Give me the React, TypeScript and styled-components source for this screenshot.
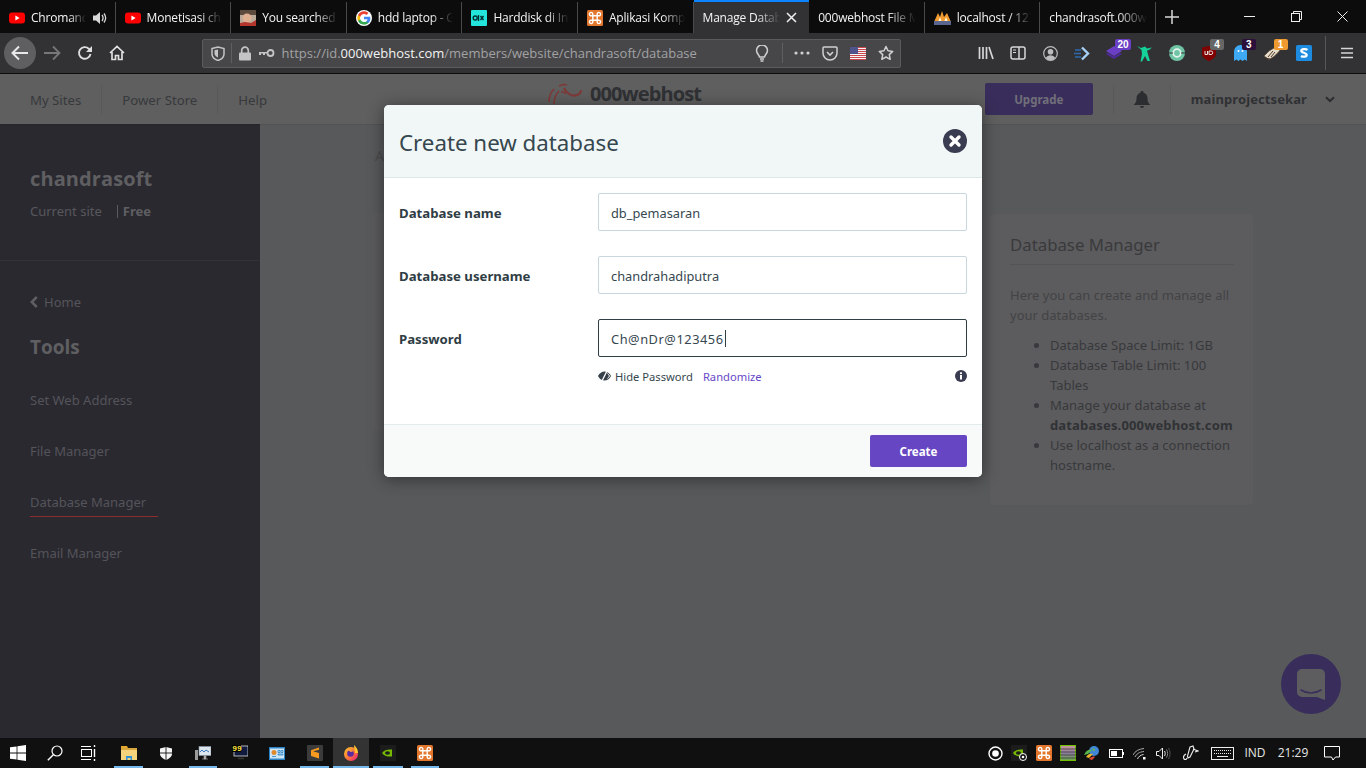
import React from "react";
import styled, { createGlobalStyle } from "styled-components";

const Global = createGlobalStyle`
  html, body { margin: 0; padding: 0; height: 100%; background: #58595b; overflow: hidden; }
  #root { height: 100%; }
  * { box-sizing: border-box; }
`;

const Screen = styled.div`
  width: 1366px; height: 768px; display: flex; flex-direction: column;
  font-family: "Noto Sans", "Open Sans", sans-serif; overflow: hidden;
`;

/* ---------- tab strip ---------- */
const TabStrip = styled.div`
  height: 33px; background: #0c0c0d; display: flex; flex: none; align-items: stretch;
`;
const TabCell = styled.div<{ $active?: boolean; $sep?: boolean }>`
  width: 115.6px; flex: none; display: flex; align-items: center; gap: 6px;
  padding: 0 ${(p) => (p.$active ? 12 : 9)}px 0 9px;
  color: #f4f4f4; font-size: 12px; position: relative;
  font-family: "Open Sans", sans-serif; letter-spacing: -0.2px;
  background: ${(p) => (p.$active ? "#323234" : "transparent")};
  border-top: 2px solid ${(p) => (p.$active ? "#0a84ff" : "transparent")};
  ${(p) => (p.$sep ? "box-shadow: inset -1px 0 0 #4a4a4c;" : "")}
`;
const TabLabel = styled.span`
  flex: 1; min-width: 0; overflow: hidden; white-space: nowrap;
  -webkit-mask-image: linear-gradient(90deg, #000 70%, transparent 100%);
  mask-image: linear-gradient(90deg, #000 70%, transparent 100%);
`;
const NewTab = styled.div`
  width: 33px; display: flex; align-items: center; justify-content: center; flex: none;
`;
const StripSpacer = styled.div`flex: 1;`;
const WinBtn = styled.div`
  width: 46.5px; display: flex; align-items: center; justify-content: center; flex: none;
  padding-bottom: 1px;
`;

/* ---------- toolbar ---------- */
const Toolbar = styled.div`
  height: 41px; flex: none; background: #323234; border-bottom: 1px solid #0c0c0d;
  display: flex; align-items: center; padding-left: 4px;
`;
const NavBtn = styled.div<{ $round?: boolean }>`
  width: 32px; height: 32px; flex: none; display: flex; align-items: center; justify-content: center;
  border-radius: 50%; margin-right: 0.4px;
  background: ${(p) => (p.$round ? "#5f5f62" : "transparent")};
`;
const UrlBar = styled.div`
  width: 699px; height: 29px; margin-left: 68px; flex: none; background: #474749; border: 1px solid #5b5b5d;
  border-radius: 2px; display: flex; align-items: center; padding-left: 8px; position: relative;
`;
const UrlIcon = styled.span<{ $w: number }>`
  width: ${(p) => p.$w}px; flex: none; display: flex; align-items: center; justify-content: center;
`;
const UrlSep = styled.span<{ $mx?: number }>`
  width: 1px; height: 20px; background: #5f5f61; flex: none; margin: 0 ${(p) => p.$mx ?? 6}px;
`;
const UrlText = styled.div`
  flex: 1; min-width: 0; font-size: 13px; color: #a2a2a4; white-space: nowrap;
  font-family: "Open Sans", sans-serif; margin-left: 1px;
  b { font-weight: 400; color: #f2f2f2; }
`;
const ExtRow = styled.div`
  margin-left: 70px; display: flex; align-items: center; height: 100%;
`;
const ExtBtn = styled.div`
  width: 31.8px; height: 32px; flex: none; display: flex; align-items: center; justify-content: center; position: relative;
`;
const Badge = styled.span<{ $bg: string; $r?: number }>`
  position: absolute; top: 2px; right: ${(p) => p.$r ?? 1}px; height: 11px; min-width: 14px; padding: 0 2px;
  font: 700 10px/11px "Liberation Sans", sans-serif; color: #fff; text-align: center;
  background: ${(p) => p.$bg}; border-radius: 2px;
`;
const ToolSep = styled.span`
  width: 1px; height: 34px; background: #58585a; flex: none; margin: 0 5px 0 5px;
`;

/* ---------- page behind the dialog ---------- */
const Page = styled.div`
  flex: 1; min-height: 0; position: relative; display: flex; flex-direction: column; background: #58595b;
`;
const SiteHeader = styled.header`
  height: 50px; flex: none; background: #5f5f5f; display: flex; align-items: center; position: relative;
  box-shadow: 0 1px 1px rgba(0,0,0,.06); z-index: 1;
`;
const HeaderLink = styled.div<{ $sep?: boolean }>`
  color: #37393c; font-size: 13.2px; padding: 1px 20px 0; height: 29px; display: flex; align-items: center;
  border-right: ${(p) => (p.$sep ? "1px solid #585858" : "0")};
  &:first-child { padding-left: 30px; }
`;
const Logo = styled.div`
  position: absolute; left: 548px; top: 9px; width: 154px; height: 41px; overflow: hidden;
  display: flex; align-items: flex-start; gap: 8px;
`;
const LogoWords = styled.div`display: flex; flex-direction: column; align-items: flex-end;`;
const LogoText = styled.div`
  font: 700 20px/22px "Open Sans", sans-serif; color: #2f3134; letter-spacing: -0.9px;
`;
const LogoSub = styled.div`
  font: 700 8px/10px "Open Sans", sans-serif; color: #2f3134; letter-spacing: .1px;
`;
const HeaderRight = styled.div`
  margin-left: auto; display: flex; align-items: center; height: 100%;
`;
const UpgradeBtn = styled.div`
  width: 108px; height: 32px; background: #392e5b; border-radius: 2px; margin-right: 20px;
  display: flex; align-items: center; justify-content: center;
  color: #716f7a; font-size: 11.5px; font-weight: 700;
`;
const BellCell = styled.div`
  width: 58px; height: 29px; display: flex; align-items: center; justify-content: center;
  border-left: 1px solid #585858; border-right: 1px solid #585858;
`;
const UserName = styled.div`
  color: #2f3134; font-weight: 700; font-size: 13px; padding-left: 20px; letter-spacing: .1px;
`;
const Chevron = styled.div`
  width: 59px; display: flex; justify-content: flex-start; padding-left: 18px;
`;

const Body = styled.div`flex: 1; min-height: 0; display: flex;`;
const Sidebar = styled.aside`
  width: 260px; flex: none; background: #2a2930; display: flex; flex-direction: column;
`;
const SideTop = styled.div`
  height: 137px; padding: 41px 30px 0; border-bottom: 1px solid #323137; flex: none;
`;
const SiteName = styled.div`
  color: #5f5f62; font: 700 20px/27px "Open Sans", sans-serif; letter-spacing: .1px;
`;
const SiteMeta = styled.div`
  color: #58585c; font-size: 13px; margin-top: 10px; display: flex; align-items: center; height: 18px;
  b { color: #5f5f62; font-weight: 700; }
`;
const Pipe = styled.span`
  width: 1px; height: 13px; background: #5a5a5e; margin: 0 5px 0 15px;
`;
const SideNav = styled.nav`
  padding: 31px 30px 0; display: flex; flex-direction: column; align-items: flex-start;
`;
const BackLink = styled.div`
  color: #55555a; font-size: 13px; display: flex; align-items: center; gap: 6px; height: 20px; margin-bottom: 21px;
`;
const ToolsTitle = styled.div`
  color: #5f5f62; font: 700 19px/28px "Open Sans", sans-serif; margin-bottom: 30px;
`;
const NavItem = styled.div<{ $current?: boolean }>`
  color: #54545a; font-size: 13px; height: 24px; line-height: 18px; margin-bottom: 27px;
  padding-bottom: 6px; width: 128px; white-space: nowrap;
  border-bottom: 1px solid ${(p) => (p.$current ? "#8a2f2c" : "transparent")};
`;
const Main = styled.main`flex: 1; min-width: 0; position: relative; padding: 90px 0 0 730px;`;
const InfoCard = styled.section`
  width: 263px; height: 291px; background: #5c5c5e; border-radius: 4px; padding: 18px 19px 0 20px;
  color: #434345; font-size: 13px; line-height: 20px; position: relative;
`;
const InfoTitle = styled.h3`
  margin: 0 0 20px; font-size: 16.8px; font-weight: 400; line-height: 26px; color: #3a3a3c;
  padding-bottom: 6px; border-bottom: 1px solid #545456;
`;
const InfoText = styled.p`margin: 0 0 10px;`;
const InfoList = styled.ul`
  margin: 0; padding: 0 0 0 40px; color: #38393c; margin-right: -6px;
  b { font-weight: 700; color: #303235; letter-spacing: .15px; }
`;
const HiddenCard = styled.section`
  position: absolute; left: 112px; top: 89px; width: 310px; height: 217px;
  background: #5b5b5d; border-radius: 4px;
`;
const Crumb = styled.div`
  position: absolute; left: 115px; top: 22px; color: #48494b; font-size: 14px;
`;
const ChatBubble = styled.div`
  position: absolute; right: 25px; bottom: 24px; width: 60px; height: 60px; border-radius: 50%;
  background: #392e5b; display: flex; align-items: center; justify-content: center; z-index: 1;
`;

/* ---------- dialog ---------- */
const Modal = styled.div`
  position: absolute; left: 384px; top: 31px; width: 598px; height: 372px; z-index: 2;
  background: #fff; border-radius: 5px; overflow: hidden;
  box-shadow: 0 2px 16px rgba(0,0,0,.45); display: flex; flex-direction: column;
`;
const ModalHead = styled.div`
  height: 73px; flex: none; background: #f1f7f7; border-bottom: 1px solid #dfe8e8;
  display: flex; align-items: center; justify-content: space-between; padding: 0 15px;
`;
const ModalTitle = styled.h2`
  margin: 3px 0 0; font-size: 22.3px; font-weight: 400; color: #36474f; line-height: 30px;
`;
const CloseBtn = styled.div`
  width: 24px; height: 24px; margin-bottom: 1px; display: flex;
`;
const ModalBody = styled.div`
  flex: 1; padding: 15px 15px 0; display: flex; flex-direction: column; gap: 25px;
`;
const Field = styled.div`
  display: grid; grid-template-columns: 199px 369px; align-items: center;
`;
const FieldLabel = styled.label`
  color: #2f3d45; font-size: 13.2px; font-weight: 700; padding-top: 2px;
`;
const TextBox = styled.div<{ $focus?: boolean; $track?: number }>`
  height: 38px; border: 1px solid ${(p) => (p.$focus ? "#2f3d45" : "#c8d6dd")}; border-radius: 2px;
  padding: 1px 12px 0; display: flex; align-items: center; font-size: 12.8px; color: #36474f;
  letter-spacing: ${(p) => p.$track ?? 0}px;
`;
const Caret = styled.span`
  display: inline-block; width: 1px; height: 17px; background: #2f3d45; margin-left: 1px;
`;
const PwdTools = styled.div`
  margin: -14px 0 0 199px; width: 369px; height: 16px; display: flex; align-items: center;
  font-size: 11.2px; color: #36474f; position: relative;
`;
const HideLink = styled.span`display: flex; align-items: center; gap: 4px; margin-right: 10px;`;
const RandomLink = styled.span`color: #6747c7;`;
const InfoIcon = styled.span`margin-left: auto; display: flex;`;
const ModalFoot = styled.div`
  height: 53px; flex: none; background: #f8f9f9; border-top: 1px solid #e3ecec;
  display: flex; align-items: center; justify-content: flex-end; padding: 0 15px;
`;
const CreateBtn = styled.div`
  width: 97px; height: 32px; background: #6746c3; border-radius: 2px; color: #fff; font-size: 11.5px; font-weight: 700;
  display: flex; align-items: center; justify-content: center;
`;

/* ---------- taskbar ---------- */
const Taskbar = styled.div`
  height: 30px; flex: none; background: #101010; display: flex; align-items: stretch;
`;
const TaskBtn = styled.div<{ $w?: number; $on?: boolean; $active?: boolean; $nudge?: number }>`
  width: ${(p) => p.$w ?? 37}px; flex: none; display: flex; align-items: center; justify-content: center; position: relative;
  padding-right: ${(p) => p.$nudge ?? 0}px;
  background: ${(p) => (p.$active ? "#333" : "transparent")};
  ${(p) =>
    p.$on
      ? `&::after { content: ""; position: absolute; left: ${p.$active ? 0 : 4}px; right: ${p.$active ? 0 : 4}px; bottom: 0; height: 2px; background: #76b9ed; }`
      : ""}
`;
const Tray = styled.div`margin-left: auto; display: flex; align-items: center; height: 100%;`;
const TrayIcon = styled.div<{ $w?: number }>`
  width: ${(p) => p.$w ?? 24}px; flex: none; display: flex; align-items: center; justify-content: center; height: 100%;
`;
const TrayText = styled.div<{ $w: number }>`
  width: ${(p) => p.$w}px; flex: none; text-align: center; color: #e6e6e6; font: 12px/30px "Open Sans", sans-serif;
`;

/* ---------- icons ---------- */
const YouTube = () => (
  <svg width="16" height="16" viewBox="0 0 16 16"><rect y="2.5" width="16" height="11" rx="3" fill="#f00" /><path d="M6.4 5.5v5L10.6 8z" fill="#fff" /></svg>
);
const Speaker = () => (
  <svg width="15" height="14" viewBox="0 0 15 14"><path d="M1 4.5h3L8 1v12L4 9.500H1z" fill="#d8d8d8" /><path d="M10 4c1.300 1.800 1.300 4.200 0 6M12 2.500c2 2.700 2 6.300 0 9" stroke="#d8d8d8" strokeWidth="1.300" fill="none" /></svg>
);
const Portrait = () => (
  <svg width="16" height="16" viewBox="0 0 16 16"><rect width="16" height="16" fill="#b9aa9a" /><rect width="16" height="5" fill="#5c4a3c" /><circle cx="7" cy="8" r="4.500" fill="#e0b090" /><path d="M0 16v-3l5-1 6 1 5-3v6z" fill="#b5342c" /></svg>
);
const Google = () => (
  <svg width="16" height="16" viewBox="0 0 48 48"><circle cx="24" cy="24" r="24" fill="#fff" /><path fill="#4285F4" d="M43 24.500c0-1.400-.1-2.700-.4-4H24v7.600h10.700c-.5 2.500-1.900 4.600-4 6v5h6.500C41 35.600 43 30.500 43 24.500z" /><path fill="#34A853" d="M24 44c5.400 0 9.900-1.800 13.200-4.800l-6.500-5c-1.800 1.200-4 1.900-6.700 1.900-5.200 0-9.600-3.500-11.200-8.200H6.100v5.200C9.400 39.600 16.200 44 24 44z" /><path fill="#FBBC05" d="M12.800 27.900c-.4-1.200-.6-2.500-.6-3.900s.2-2.700.6-3.900v-5.200H6.100C4.800 17.600 4 20.700 4 24s.8 6.400 2.100 9.100z" /><path fill="#EA4335" d="M24 11.900c2.900 0 5.600 1 7.700 3l5.800-5.800C34 5.800 29.400 4 24 4 16.200 4 9.400 8.400 6.100 14.900l6.700 5.200c1.600-4.700 6-8.200 11.200-8.200z" /></svg>
);
const Olx = () => (
  <svg width="16" height="16" viewBox="0 0 16 16"><rect width="16" height="16" rx="1" fill="#23e5db" /><circle cx="4.200" cy="8" r="2" fill="none" stroke="#002f34" strokeWidth="1.400" /><path d="M7.500 5v6" stroke="#002f34" strokeWidth="1.400" /><path d="M9.500 6l3 4M12.500 6l-3 4" stroke="#002f34" strokeWidth="1.400" /></svg>
);
const Xampp = ({ size = 16 }: { size?: number }) => (
  <svg width={size} height={size} viewBox="0 0 16 16"><rect width="16" height="16" rx="1.500" fill="#e2762c" /><path d="M5.800 5.800H4.300a1.700 1.700 0 1 1 1.500-1.500v7.400a1.700 1.700 0 1 1-1.500-1.500h7.400a1.700 1.700 0 1 1-1.500 1.500V4.300a1.700 1.700 0 1 1 1.500 1.500z" fill="none" stroke="#fff" strokeWidth="1.400" /></svg>
);
const Pma = () => (
  <svg width="17" height="16" viewBox="0 0 17 16"><path d="M0 12 4 3l2 4 2-6 2 6 3-4 4 9z" fill="#f29b2f" /><path d="M4 12l2-5 2 5zM10 12l2-5 2 5z" fill="#fff2d0" /><rect x="0" y="11" width="17" height="4" fill="#5a6590" /></svg>
);
const BackArrow = () => (
  <svg width="18" height="16" viewBox="0 0 18 16"><path d="M8 1.500 1.500 8 8 14.500M2 8h15" stroke="#e8e8e8" strokeWidth="2" fill="none" /></svg>
);
const FwdArrow = () => (
  <svg width="18" height="16" viewBox="0 0 18 16"><path d="M10 1.500 16.500 8 10 14.500M16 8H1" stroke="#77777a" strokeWidth="1.800" fill="none" /></svg>
);
const Reload = () => (
  <svg width="16" height="16" viewBox="0 0 16 16"><path d="M13.500 9A5.800 5.800 0 1 1 11.800 3.700L14 6" stroke="#dedede" strokeWidth="1.900" fill="none" /><path d="M15 1v6H9z" fill="#dedede" /></svg>
);
const Home = () => (
  <svg width="16" height="16" viewBox="0 0 16 16"><path d="M1 8 8 1.500 15 8M3 7v7.500h3.500v-4h3v4H13V7" stroke="#e0e0e0" strokeWidth="1.700" fill="none" /></svg>
);
const Shield = () => (
  <svg width="14" height="15" viewBox="0 0 14 15"><path d="M1 2.500 7 1l6 1.500V8c0 3-3 5.500-6 6.500C4 13.500 1 11 1 8z" fill="none" stroke="#c4c4c6" strokeWidth="1.500" /><path d="M7 3.500v8c-2-1-3.500-2.300-3.500-4V4.300z" fill="#c4c4c6" /></svg>
);
const Lock = () => (
  <svg width="14" height="15" viewBox="0 0 14 15"><rect x="1" y="6.500" width="12" height="8" rx="1" fill="#c4c4c6" /><path d="M3.700 7V4.500a3.300 3.300 0 0 1 6.600 0V7" stroke="#c4c4c6" strokeWidth="1.700" fill="none" /></svg>
);
const KeyIcon = () => (
  <svg width="17" height="10" viewBox="0 0 17 10"><circle cx="12.500" cy="5" r="3" fill="none" stroke="#c4c4c6" strokeWidth="1.800" /><path d="M10 4H1v3h2V5.500h2V7h2V5.500h3z" fill="#c4c4c6" /></svg>
);
const Bulb = () => (
  <svg width="14" height="17" viewBox="0 0 14 17"><path d="M4.500 12c0-2-3-3.500-3-6.500a5.500 5.500 0 0 1 11 0c0 3-3 4.500-3 6.500z" fill="none" stroke="#d0d0d2" strokeWidth="1.500" /><path d="M5 14h4M5.500 16h3" stroke="#d0d0d2" strokeWidth="1.500" /></svg>
);
const Dots = () => (
  <svg width="16" height="4" viewBox="0 0 16 4"><circle cx="2" cy="2" r="1.600" fill="#d0d0d2" /><circle cx="8" cy="2" r="1.600" fill="#d0d0d2" /><circle cx="14" cy="2" r="1.600" fill="#d0d0d2" /></svg>
);
const Pocket = () => (
  <svg width="16" height="15" viewBox="0 0 16 15"><path d="M2 1h12a1 1 0 0 1 1 1v5a7 7 0 0 1-14 0V2a1 1 0 0 1 1-1z" fill="none" stroke="#d0d0d2" strokeWidth="1.500" /><path d="M5 6l3 3 3-3" stroke="#d0d0d2" strokeWidth="1.600" fill="none" /></svg>
);
const Flag = () => (
  <svg width="16" height="13" viewBox="0 0 16 13">
    <rect width="16" height="13" fill="#f5f5f5" />
    {[0, 2, 4, 6, 8, 10, 12].map((y) => (<rect key={y} y={y} width="16" height="1" fill="#c8484f" />))}
    <rect width="8" height="7" fill="#4f558c" />
  </svg>
);
const Star = () => (
  <svg width="16" height="16" viewBox="0 0 16 16"><path d="M8 1.500l2 4.300 4.700.6-3.400 3.200.9 4.700L8 12l-4.200 2.300.9-4.700L1.300 6.400 6 5.800z" fill="none" stroke="#d0d0d2" strokeWidth="1.500" strokeLinejoin="round" /></svg>
);
const Library = () => (
  <svg width="16" height="14" viewBox="0 0 16 14"><path d="M1.500 1v12M5 1v12M8.500 1v12M11 1l4 12" stroke="#d6d6d8" strokeWidth="1.700" fill="none" /></svg>
);
const SidebarIc = () => (
  <svg width="16" height="14" viewBox="0 0 16 14"><rect x="1" y="1" width="14" height="12" rx="2" fill="none" stroke="#d6d6d8" strokeWidth="1.500" /><path d="M9 1v12" stroke="#d6d6d8" strokeWidth="1.500" /><path d="M3 4h3M3 6.500h3" stroke="#d6d6d8" /></svg>
);
const Account = () => (
  <svg width="15" height="15" viewBox="0 0 15 15"><circle cx="7.500" cy="7.500" r="6.800" fill="none" stroke="#bdbdbf" strokeWidth="1.200" /><circle cx="7.500" cy="5.800" r="2.800" fill="#bdbdbf" /><path d="M2.800 12c1-2 2.800-2.800 4.700-2.800s3.700.8 4.700 2.800a6 6 0 0 1-9.400 0z" fill="#bdbdbf" /></svg>
);
const DashArrow = () => (
  <svg width="16" height="15" viewBox="0 0 16 15"><path d="M8 1.500l6 6-6 6" fill="none" stroke="#a6d0f5" strokeWidth="2.400" /><path d="M1 4h6M0 7.500h7M1 11h6" stroke="#2d6bb0" strokeWidth="1.600" /></svg>
);
const Layers = () => (
  <svg width="16" height="14" viewBox="0 0 16 14"><path d="M8 0l8 5-8 5-8-5z" fill="#6a3fc4" /><path d="M0 8l8 5 8-5-2-1-6 3.500L2 7z" fill="#4f2a9e" /></svg>
);
const Runner = () => (
  <svg width="16" height="17" viewBox="0 0 16 17"><path d="M0 1l4 2 4-1.500 2 2 5-1-3 2.500-2 .5 1 4 2 6.500h-2.500L8 11l-3 5.500H3.500L5 9 4.500 5z" fill="#14d29a" /></svg>
);
const Ring = () => (
  <svg width="16" height="16" viewBox="0 0 16 16"><circle cx="8" cy="8" r="8" fill="#6fc4a4" /><circle cx="8" cy="8" r="3.800" fill="none" stroke="#e6f3ee" strokeWidth="1.800" /><path d="M0 8h4M12 8h4" stroke="#323234" strokeWidth="1" /></svg>
);
const UBlock = () => (
  <svg width="14" height="15" viewBox="0 0 14 15"><path d="M0 1.500 7 0l7 1.500V8c0 3-3.500 5.500-7 7-3.500-1.500-7-4-7-7z" fill="#800000" /><path d="M3 5v3.500h2.500V5M7 5v3.500h2a1.700 1.700 0 0 0 0-3.500z" fill="none" stroke="#e8dcdc" strokeWidth="1" /></svg>
);
const Ghost = () => (
  <svg width="13" height="16" viewBox="0 0 13 16"><path d="M0 16V6.500a6.500 6.500 0 0 1 13 0V16l-2.200-1.500L8.500 16l-2-1.500L4.500 16l-2.200-1.500z" fill="#3ea9f5" /><circle cx="4.500" cy="6" r="1" fill="#fff" /><circle cx="8.500" cy="6" r="1" fill="#fff" /></svg>
);
const Shoe = () => (
  <svg width="17" height="14" viewBox="0 0 17 14"><path d="M0 10l5-5 5-3 3 1.500 4-.5-3 3.500-4 4-5 3z" fill="#e7dcc9" stroke="#5a4a3a" strokeWidth=".8" /><path d="M4 11l5-6M7 11l4-5M1 12l5 1" stroke="#4a3a2a" strokeWidth="1" /></svg>
);
const SBox = () => (
  <svg width="16" height="16" viewBox="0 0 16 16"><rect width="16" height="16" rx="1.500" fill="#1c8be0" /><path d="M11.500 4.800C10 3.800 5.500 3.700 5.300 5.800c-.2 2.200 5.400 1.800 5.400 4.200 0 2-4 2.100-5.700 1" fill="none" stroke="#fff" strokeWidth="2.200" /></svg>
);
const Burger = () => (
  <svg width="14" height="12" viewBox="0 0 14 12"><path d="M1 1.500h12M1 6h12M1 10.500h12" stroke="#d6d6d8" strokeWidth="1.700" /></svg>
);
const LogoMark = () => (
  <svg width="34" height="24" viewBox="0 0 34 24" fill="none" stroke="#7f3a38" strokeWidth="1.600"><path d="M1 19C1 14 3 9 6 6" /><path d="M6 21C6 16 8 11 11 8" /><path d="M11 3c2-1 5-2 8-1" /><path d="M13 9c3 0 3 0 5 2" /><path d="M16 5c2 5 8 9 13 7 3-1 4-3 4-5" strokeWidth="2.200" /></svg>
);
const Bell = () => (
  <svg width="16" height="17" viewBox="0 0 16 17"><path d="M8 0a1.500 1.500 0 0 1 1.500 1.800C12 2.500 13.500 4.500 13.500 7c0 4 1 5 2.500 6.500V14H0v-.5C1.500 12 2.500 11 2.500 7c0-2.500 1.500-4.500 4-5.200A1.500 1.500 0 0 1 8 0zM6 15h4a2 2 0 0 1-4 0z" fill="#2b2d30" /></svg>
);
const ChevDown = () => (
  <svg width="10" height="7" viewBox="0 0 10 7"><path d="M1 1.200 5 5l4-3.800" stroke="#2b2d30" strokeWidth="2" fill="none" /></svg>
);
const ChevLeft = () => (
  <svg width="8" height="12" viewBox="0 0 8 12"><path d="M6.800 1 1.800 6l5 5" stroke="#5f5f62" strokeWidth="2.500" fill="none" /></svg>
);
const CloseCircle = () => (
  <svg width="24" height="24" viewBox="0 0 24 24"><circle cx="12" cy="12" r="12" fill="#3a3c52" /><path d="M8 8l8 8M16 8l-8 8" stroke="#fff" strokeWidth="3.400" strokeLinecap="round" /></svg>
);
const EyeSlash = () => (
  <svg width="13" height="12" viewBox="0 0 13 12"><path d="M0 6C1.500 3 4 1.500 6.500 1.500S11.500 3 13 6C11.500 9 9 10.500 6.500 10.500S1.500 9 0 6z" fill="#36404a" /><path d="M9.500 0 3.500 12" stroke="#fff" strokeWidth="1.300" /><path d="M9.500 3.500c.9.700 1.500 1.500 2 2.500-.5 1-1.100 1.800-2 2.500" stroke="#fff" fill="none" /></svg>
);
const InfoDot = () => (
  <svg width="12" height="12" viewBox="0 0 12 12"><circle cx="6" cy="6" r="6" fill="#3a3c52" /><rect x="5" y="5" width="2" height="4.500" fill="#fff" /><rect x="5" y="2.300" width="2" height="1.800" fill="#fff" /></svg>
);
const Chat = () => (
  <svg width="28" height="31" viewBox="0 0 28 31"><path d="M5 0h18a5 5 0 0 1 5 5v26l-8-3H5a5 5 0 0 1-5-5V5a5 5 0 0 1 5-5z" fill="#5d5d5f" /><path d="M4 21c6 4 14 4 20 0" stroke="#392e5b" strokeWidth="1.600" fill="none" strokeLinecap="round" /></svg>
);
const Win = () => (
  <svg width="16" height="16" viewBox="0 0 16 16"><path d="M0 2.300 6.600 1.400V7.600H0zM7.400 1.300 16 0v7.600H7.400zM0 8.400h6.600v6.200L0 13.700zM7.400 8.400H16V16l-8.600-1.300z" fill="#fff" /></svg>
);
const Search = () => (
  <svg width="16" height="16" viewBox="0 0 16 16"><circle cx="10" cy="6" r="5" fill="none" stroke="#fff" strokeWidth="1.200" /><path d="M6.300 9.700 .8 15.300" stroke="#fff" strokeWidth="1.400" /></svg>
);
const TaskView = () => (
  <svg width="16" height="16" viewBox="0 0 16 16" fill="none" stroke="#fff"><path d="M0 1.500h10M0 14.500h10" /><rect x=".5" y="4.500" width="10" height="7" /><path d="M13.500 0v2M13.500 14v2M13.500 4v8" strokeWidth="1.400" /></svg>
);
const Explorer = () => (
  <svg width="16" height="16" viewBox="0 0 16 16"><path d="M0 1h6l1 2H0z" fill="#e5a82e" /><rect y="3" width="16" height="12" fill="#f4d37c" /><rect y="3" width="16" height="2" fill="#d9a63d" /><path d="M5 15v-4h6v4H9.500v-2h-3v2z" fill="#2e8fd6" /></svg>
);
const DefShield = () => (
  <svg width="12" height="13" viewBox="0 0 12 13"><path d="M0 1.500 6 0l6 1.500V7c0 2.500-3 5-6 6-3-1-6-3.500-6-6z" fill="#f4f4f4" /><path d="M6 0v13M0 6h12" stroke="#101010" strokeWidth=".9" /></svg>
);
const MonitorPulse = () => (
  <svg width="16" height="16" viewBox="0 0 16 16"><rect x="0" y="5" width="3" height="10" fill="#9a9a9a" /><rect x="4" y="1.500" width="12" height="9" fill="#dde6ee" stroke="#8a98a8" strokeWidth=".6" /><path d="M5 7l2-2 2 2 2-2 3 2" stroke="#3b7bc0" fill="none" /><path d="M7 14h6M9 11h2v3H9z" fill="#aaa" stroke="#aaa" strokeWidth=".6" /></svg>
);
const Fps = () => (
  <svg width="16" height="16" viewBox="0 0 16 16"><rect x="2" y="1" width="14" height="10" fill="#0f1a3c" stroke="#ddd" strokeWidth=".8" /><rect x="0" y="0" width="9" height="7" fill="#000" /><text x="0.300" y="6.300" fontFamily="Liberation Mono, monospace" fontWeight="700" fontSize="8" fill="#ffe23c">99</text><path d="M6 13.500h6" stroke="#333" strokeWidth="1.500" /></svg>
);
const ControlPanel = () => (
  <svg width="16" height="13" viewBox="0 0 16 13"><rect width="16" height="13" fill="#2a82c4" /><rect x="1" y="1.500" width="14" height="10" fill="#cfe6f6" /><circle cx="5" cy="5.500" r="2.500" fill="#e08a2e" /><path d="M9 3.500h2v2H9zM12 3.500h2v2h-2zM9 7h5v1H9zM3 9.500h4" stroke="#2a82c4" strokeWidth=".8" fill="none" /></svg>
);
const Sublime = () => (
  <svg width="16" height="16" viewBox="0 0 16 16"><rect width="16" height="16" rx="1" fill="#3b3b3b" /><path d="M12 2.500 4 5.300v3l8 2.500V8L6 6.200l6-1.500zM4 8.300v2.800L12 13.500v-3z" fill="#f79a1f" /></svg>
);
const Firefox = () => (
  <svg width="16" height="16" viewBox="0 0 16 16"><defs><linearGradient id="ffg" x1="0" y1="0" x2="1" y2="1"><stop offset="0" stopColor="#ffcb2e" /><stop offset=".55" stopColor="#ff7139" /><stop offset="1" stopColor="#e31587" /></linearGradient></defs><circle cx="8" cy="9" r="7" fill="url(#ffg)" /><path d="M11 0c2 2 4 4 4 8h-3c0-3-1-5-1-8z" fill="#ffc42e" /><circle cx="7.500" cy="8.500" r="3.300" fill="#5b2a9e" /><path d="M5 5.500c1.500-1 4-1 5 1l-2 .5z" fill="#ff9640" /></svg>
);
const Nvidia = ({ badge }: { badge?: boolean }) => (
  <svg width="16" height="16" viewBox="0 0 16 16"><rect width="16" height="16" fill="#1c1c1c" /><path d="M2 8c2-3 6-4 10-3.500v7C8 12 4 11 2 8z" fill="#76b900" /><ellipse cx="7.500" cy="8" rx="2.500" ry="1.700" fill="#1c1c1c" />{badge && (<><circle cx="12" cy="12" r="3.500" fill="#101010" stroke="#fff" /><circle cx="12" cy="12" r="1.300" fill="#fff" /></>)}</svg>
);
const RecordDot = () => (
  <svg width="15" height="15" viewBox="0 0 15 15"><circle cx="7.500" cy="7.500" r="6.500" fill="none" stroke="#fff" strokeWidth="1.400" /><circle cx="7.500" cy="7.500" r="3.300" fill="#fff" /></svg>
);
const GridIcon = () => (
  <svg width="16" height="16" viewBox="0 0 16 16"><defs><linearGradient id="gg" x1="0" y1="0" x2="0" y2="1"><stop offset="0" stopColor="#c99" /><stop offset=".5" stopColor="#8c7ca0" /><stop offset="1" stopColor="#6da84a" /></linearGradient></defs><rect x=".5" y=".5" width="15" height="15" fill="url(#gg)" stroke="#6ec000" /><path d="M0 4h16M0 7h16M0 10h16M0 13h16" stroke="#222" strokeWidth=".6" /></svg>
);
const Idm = () => (
  <svg width="16" height="16" viewBox="0 0 16 16"><circle cx="10" cy="6" r="5" fill="#3f86d8" /><path d="M8 3l3 1-1 3z" fill="#6cb84c" /><path d="M0 10c2-5 5-6 8-5L4 9z" fill="#5ab84a" /><path d="M2 12c2-3 4-4 7-3l-4 4z" fill="#e8b82e" /><path d="M5 14c2-2 4-3 6-2l-3 3z" fill="#e24a3a" /></svg>
);
const Battery = () => (
  <svg width="15" height="9" viewBox="0 0 15 9"><rect x=".5" y=".5" width="13" height="8" fill="none" stroke="#fff" /><rect x="2" y="2" width="6" height="5" fill="#fff" /><rect x="14" y="3" width="1" height="3" fill="#fff" /></svg>
);
const Wifi = () => (
  <svg width="14" height="13" viewBox="0 0 14 13" fill="none" stroke="#aaa"><path d="M0 8C2 4 6 2 11 1.500" /><path d="M2 10c1.500-3 4-5 9-5.500" /><path d="M4.500 12c1-2.500 3-4 6-4.500" stroke="#ddd" /><rect x="10" y="10" width="2.500" height="2.500" fill="#fff" stroke="none" /></svg>
);
const Volume = () => (
  <svg width="16" height="13" viewBox="0 0 16 13" fill="none" stroke="#eee"><path d="M.5 4.500h2.500L6.500 1v11L3 8.500H.5z" /><path d="M8.500 4c.9 1.500.9 3.500 0 5" /><path d="M10.500 2.500c1.500 2.500 1.500 5.500 0 8" stroke="#888" /><path d="M12.500 1c2 3.500 2 7.500 0 11" stroke="#555" /></svg>
);
const Pen = () => (
  <svg width="16" height="16" viewBox="0 0 16 16" fill="none" stroke="#eee" strokeWidth="1.100"><path d="M7 2l3-1 1 3-4 8-2 1-.5-2z" /><path d="M10 4l5 2-3 1" /><path d="M3 9c-2 1-3 3-2 5 1 1 2.500.5 3-1" /></svg>
);
const Keyboard = () => (
  <svg width="23" height="13" viewBox="0 0 23 13" fill="none" stroke="#eee"><rect x=".5" y=".5" width="22" height="12" /><path d="M3 3.500h17M3 6.500h17" strokeDasharray="1 1" /><path d="M6 9.500h11" /></svg>
);
const Notify = () => (
  <svg width="16" height="15" viewBox="0 0 16 15"><path d="M.5.500h15v10.500h-4l-2.500 3-1.500-3H.5z" fill="none" stroke="#fff" /></svg>
);

const tabs: { icon?: React.ReactNode; label: string; extra?: React.ReactNode }[] = [
  { icon: <YouTube />, label: "Chromance", extra: <Speaker /> },
  { icon: <YouTube />, label: "Monetisasi chan" },
  { icon: <Portrait />, label: "You searched for" },
  { icon: <Google />, label: "hdd laptop - Google" },
  { icon: <Olx />, label: "Harddisk di Indonesia" },
  { icon: <Xampp />, label: "Aplikasi Kompute" },
];

export default function App() {
  return (
    <Screen>
      <Global />
      <TabStrip>
        {tabs.map((t) => (
          <TabCell key={t.label} $sep>
            {t.icon}
            <TabLabel>{t.label}</TabLabel>
            {t.extra}
          </TabCell>
        ))}
        <TabCell $active>
          <TabLabel>Manage Database</TabLabel>
          <svg width="11" height="11" viewBox="0 0 11 11"><path d="M1 1l9 9M10 1l-9 9" stroke="#f0f0f0" strokeWidth="1.500" /></svg>
        </TabCell>
        <TabCell $sep><TabLabel>000webhost File Manager</TabLabel></TabCell>
        <TabCell $sep><Pma /><TabLabel>localhost / 127.0.0.1</TabLabel></TabCell>
        <TabCell $sep><TabLabel>chandrasoft.000webhost</TabLabel></TabCell>
        <NewTab>
          <svg width="14" height="14" viewBox="0 0 14 14"><path d="M7 0v14M0 7h14" stroke="#d8d8d8" strokeWidth="1.500" /></svg>
        </NewTab>
        <StripSpacer />
        <WinBtn><svg width="11" height="11" viewBox="0 0 11 11"><path d="M0 5.500h11" stroke="#eee" /></svg></WinBtn>
        <WinBtn><svg width="11" height="11" viewBox="0 0 11 11" fill="none" stroke="#eee"><rect x=".5" y="2.500" width="8" height="8" /><path d="M2.500 2.500v-2h8v8h-2" /></svg></WinBtn>
        <WinBtn><svg width="11" height="11" viewBox="0 0 11 11"><path d="M.5.500l10 10M10.500.500l-10 10" stroke="#eee" /></svg></WinBtn>
      </TabStrip>

      <Toolbar>
        <NavBtn $round><BackArrow /></NavBtn>
        <NavBtn><FwdArrow /></NavBtn>
        <NavBtn><Reload /></NavBtn>
        <NavBtn><Home /></NavBtn>
        <UrlBar>
          <UrlIcon $w={14}><Shield /></UrlIcon>
          <UrlSep />
          <UrlIcon $w={14}><Lock /></UrlIcon>
          <UrlIcon $w={29}><KeyIcon /></UrlIcon>
          <UrlText>https://id.<b>000webhost.com</b>/members/website/chandrasoft/database</UrlText>
          <UrlIcon $w={32}><Bulb /></UrlIcon>
          <UrlSep $mx={4} />
          <UrlIcon $w={30}><Dots /></UrlIcon>
          <UrlIcon $w={27}><Pocket /></UrlIcon>
          <UrlIcon $w={28}><Flag /></UrlIcon>
          <UrlIcon $w={28}><Star /></UrlIcon>
        </UrlBar>
        <ExtRow>
          <ExtBtn><Library /></ExtBtn>
          <ExtBtn><SidebarIc /></ExtBtn>
          <ExtBtn><Account /></ExtBtn>
          <ExtBtn><DashArrow /></ExtBtn>
          <ExtBtn><Layers /><Badge $bg="#6a3fc4" $r={-1}>20</Badge></ExtBtn>
          <ExtBtn><Runner /></ExtBtn>
          <ExtBtn><Ring /></ExtBtn>
          <ExtBtn><UBlock /><Badge $bg="#666">4</Badge></ExtBtn>
          <ExtBtn><Ghost /><Badge $bg="#2c0f3a">3</Badge></ExtBtn>
          <ExtBtn><Shoe /><Badge $bg="#ef9a2e">1</Badge></ExtBtn>
          <ExtBtn><SBox /></ExtBtn>
          <ToolSep />
          <ExtBtn><Burger /></ExtBtn>
        </ExtRow>
      </Toolbar>

      <Page>
        <SiteHeader>
          <HeaderLink $sep>My Sites</HeaderLink>
          <HeaderLink $sep>Power Store</HeaderLink>
          <HeaderLink>Help</HeaderLink>
          <Logo>
            <LogoMark />
            <LogoWords>
              <LogoText>000webhost</LogoText>
              <LogoSub>powered by HOSTINGER</LogoSub>
            </LogoWords>
          </Logo>
          <HeaderRight>
            <UpgradeBtn>Upgrade</UpgradeBtn>
            <BellCell><Bell /></BellCell>
            <UserName>mainprojectsekar</UserName>
            <Chevron><ChevDown /></Chevron>
          </HeaderRight>
        </SiteHeader>
        <Body>
          <Sidebar>
            <SideTop>
              <SiteName>chandrasoft</SiteName>
              <SiteMeta>Current site<Pipe /><b>Free</b></SiteMeta>
            </SideTop>
            <SideNav>
              <BackLink><ChevLeft />Home</BackLink>
              <ToolsTitle>Tools</ToolsTitle>
              <NavItem>Set Web Address</NavItem>
              <NavItem>File Manager</NavItem>
              <NavItem $current>Database Manager</NavItem>
              <NavItem>Email Manager</NavItem>
            </SideNav>
          </Sidebar>
          <Main>
            <Crumb>A</Crumb>
            <HiddenCard />
            <InfoCard>
              <InfoTitle>Database Manager</InfoTitle>
              <InfoText>Here you can create and manage all your databases.</InfoText>
              <InfoList>
                <li>Database Space Limit: 1GB</li>
                <li>Database Table Limit: 100 Tables</li>
                <li>Manage your database at <b>databases.000webhost.com</b></li>
                <li>Use localhost as a connection hostname.</li>
              </InfoList>
            </InfoCard>
          </Main>
        </Body>
        <ChatBubble><Chat /></ChatBubble>

        <Modal>
          <ModalHead>
            <ModalTitle>Create new database</ModalTitle>
            <CloseBtn><CloseCircle /></CloseBtn>
          </ModalHead>
          <ModalBody>
            <Field>
              <FieldLabel>Database name</FieldLabel>
              <TextBox>db_pemasaran</TextBox>
            </Field>
            <Field>
              <FieldLabel>Database username</FieldLabel>
              <TextBox>chandrahadiputra</TextBox>
            </Field>
            <Field>
              <FieldLabel>Password</FieldLabel>
              <TextBox $focus $track={0.55}>Ch@nDr@123456<Caret /></TextBox>
            </Field>
            <PwdTools>
              <HideLink><EyeSlash />Hide Password</HideLink>
              <RandomLink>Randomize</RandomLink>
              <InfoIcon><InfoDot /></InfoIcon>
            </PwdTools>
          </ModalBody>
          <ModalFoot><CreateBtn>Create</CreateBtn></ModalFoot>
        </Modal>
      </Page>

      <Taskbar>
        <TaskBtn $w={36}><Win /></TaskBtn>
        <TaskBtn $w={37}><Search /></TaskBtn>
        <TaskBtn $w={37} $nudge={5}><TaskView /></TaskBtn>
        <TaskBtn $w={37} $on><Explorer /></TaskBtn>
        <TaskBtn $w={38}><DefShield /></TaskBtn>
        <TaskBtn $w={36} $on><MonitorPulse /></TaskBtn>
        <TaskBtn $w={37}><Fps /></TaskBtn>
        <TaskBtn $w={38}><ControlPanel /></TaskBtn>
        <TaskBtn $w={37} $on><Sublime /></TaskBtn>
        <TaskBtn $w={36} $on $active><Firefox /></TaskBtn>
        <TaskBtn $w={38} $on><Nvidia /></TaskBtn>
        <TaskBtn $w={36} $on><Xampp /></TaskBtn>
        <Tray>
          <TrayIcon><RecordDot /></TrayIcon>
          <TrayIcon><Nvidia badge /></TrayIcon>
          <TrayIcon $w={25}><Xampp /></TrayIcon>
          <TrayIcon><GridIcon /></TrayIcon>
          <TrayIcon><Idm /></TrayIcon>
          <TrayIcon><Battery /></TrayIcon>
          <TrayIcon><Wifi /></TrayIcon>
          <TrayIcon><Volume /></TrayIcon>
          <TrayIcon $w={30}><Pen /></TrayIcon>
          <TrayIcon $w={32}><Keyboard /></TrayIcon>
          <TrayText $w={34}>IND</TrayText>
          <TrayText $w={42}>21:29</TrayText>
          <TrayIcon $w={36}><Notify /></TrayIcon>
          <TrayIcon $w={16} />
        </Tray>
      </Taskbar>
    </Screen>
  );
}
